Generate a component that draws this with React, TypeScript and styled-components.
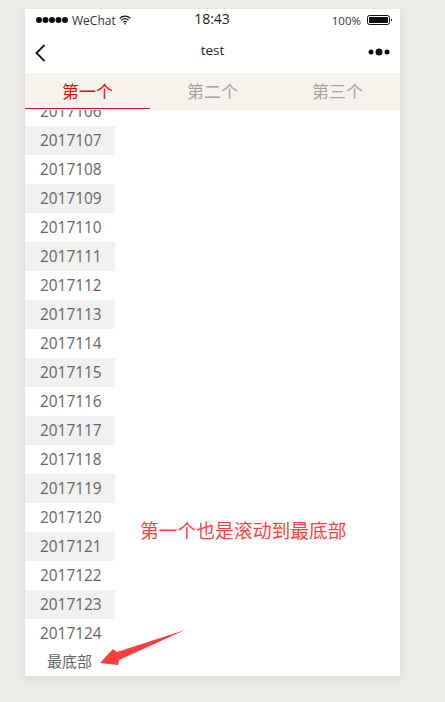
import styled, {createGlobalStyle} from 'styled-components'

const GlobalStyle = createGlobalStyle`
  html, body {
    margin: 0;
    padding: 0;
    background: #ecebe7;
    font-family: "Open Sans", "Noto Sans CJK SC", sans-serif;
  }
`

const Page = styled.div`
  height: 702px;
  padding: 9px 45px 0 25px;
  box-sizing: border-box;
  overflow: hidden;
`

const Phone = styled.div`
  position: relative;
  width: 375px;
  height: 667px;
  background: #fff;
  display: flex;
  flex-direction: column;
  box-shadow: 0 3px 8px rgba(0, 0, 0, 0.08);
`

const StatusBar = styled.div`
  height: 22px;
  padding: 0 8px 0 10px;
  display: flex;
  align-items: center;
  justify-content: space-between;
  font-size: 12px;
  color: #333;
`

const StatusSide = styled.div`
  width: 120px;
  display: flex;
  align-items: center;
  gap: 3px;
  justify-content: ${p => (p.$right ? 'flex-end' : 'flex-start')};
`

const Battery = styled.span`
  font-size: 11.500px;
  margin-right: 3px;
`

const Clock = styled.span`
  font-size: 14px;
  color: #222;
  margin: -3px 3px 0 0;
`

const NavBar = styled.div`
  height: 42px;
  padding: 0 10px;
  display: grid;
  grid-template-columns: 1fr auto 1fr;
  align-items: center;
  font-size: 13.500px;
  color: #222;
`

const NavTitle = styled.span`
  margin: -4px 0 0 0;
`

const NavBack = styled.svg`
  margin-top: 2px;
`

const NavEnd = styled.svg`
  justify-self: end;
`

const Tabs = styled.div`
  height: 37px;
  flex: none;
  background: #f5f3eb;
  display: flex;
`

const Tab = styled.div`
  flex: 1;
  position: relative;
  display: flex;
  align-items: center;
  justify-content: center;
  font-size: 17px;
  padding-bottom: 3px;
  color: ${p => (p.$active ? '#f5000f' : '#a3a3a0')};
  &::after {
    content: '';
    display: ${p => (p.$active ? 'block' : 'none')};
    position: absolute;
    left: 0;
    width: 125px;
    bottom: 1px;
    height: 1px;
    background: #d3182f;
  }
`

const List = styled.div`
  flex: 1;
  min-height: 0;
  overflow: hidden;
  display: flex;
  flex-direction: column;
  justify-content: flex-end;
`

const Row = styled.div`
  flex: none;
  width: 90px;
  height: 29px;
  line-height: 29px;
  box-sizing: border-box;
  padding-left: 15px;
  font-size: 15.400px;
  color: #666;
  background: ${p => (p.$odd ? '#f1f1f1' : 'transparent')};
`

const Bottom = styled.div`
  flex: none;
  height: 28px;
  line-height: 26px;
  padding-left: 22px;
  font-size: 15px;
  color: #666;
`

const Note = styled.div`
  position: absolute;
  left: 115px;
  top: 510px;
  font-size: 18.800px;
  line-height: 24px;
  color: #f9423f;
`

const Arrow = styled.svg`
  position: absolute;
  left: 74px;
  top: 620px;
`

const rows = Array.from({length: 19}, (_, i) => 2017106 + i)

const App = () => (
  <Page>
    <GlobalStyle />
    <Phone>
      <StatusBar>
        <StatusSide>
          <svg width="34" height="8" viewBox="0 0 34 8">
            {[4, 10.5, 17, 23.5, 30].map(x => (
              <circle key={x} cx={x} cy="4" r="3" fill="#111" />
            ))}
          </svg>
          <span>WeChat</span>
          <svg width="12" height="10" viewBox="0 0 12 10" fill="none" stroke="#111" strokeWidth="1.3">
            <path d="M.7 3.3C3.8.5 8.2.5 11.3 3.3" />
            <path d="M2.5 5.2c2.1-1.8 4.9-1.8 7 0" />
            <path d="M4.3 7c1-.8 2.4-.8 3.4 0" />
            <path d="M6 9.8 4.8 8.5c.7-.5 1.7-.5 2.4 0z" fill="#111" stroke="none" />
          </svg>
        </StatusSide>
        <Clock>18:43</Clock>
        <StatusSide $right>
          <Battery>100%</Battery>
          <svg width="25" height="10" viewBox="0 0 25 10">
            <rect x=".5" y=".5" width="22" height="9" rx="2" fill="none" stroke="#111" />
            <rect x="2" y="2" width="19" height="6" fill="#111" />
            <path d="M24 3.500l1 .7v1.600L24 6.500z" fill="#111" />
          </svg>
        </StatusSide>
      </StatusBar>
      <NavBar>
        <NavBack width="10" height="18" viewBox="0 0 10 18" fill="none" stroke="#111" strokeWidth="1.800">
          <path d="M9.500 1 1.500 9l8 8" />
        </NavBack>
        <NavTitle>test</NavTitle>
        <NavEnd width="22" height="8" viewBox="0 0 22 8" fill="#111">
          <circle cx="3" cy="4" r="2.500" />
          <circle cx="11" cy="4" r="3.500" />
          <circle cx="19" cy="4" r="2.500" />
        </NavEnd>
      </NavBar>
      <Tabs>
        <Tab $active>第一个</Tab>
        <Tab>第二个</Tab>
        <Tab>第三个</Tab>
      </Tabs>
      <List>
        {rows.map(n => (
          <Row key={n} $odd={n % 2 === 1}>{n}</Row>
        ))}
        <Bottom>最底部</Bottom>
      </List>
      <Note>第一个也是滚动到最底部</Note>
      <Arrow width="90" height="40" viewBox="0 0 90 40">
        <path d="M86 1 18 23 14 20 1 34 19 36 20 31z" fill="#f93c3c" />
      </Arrow>
    </Phone>
  </Page>
)

export default App
